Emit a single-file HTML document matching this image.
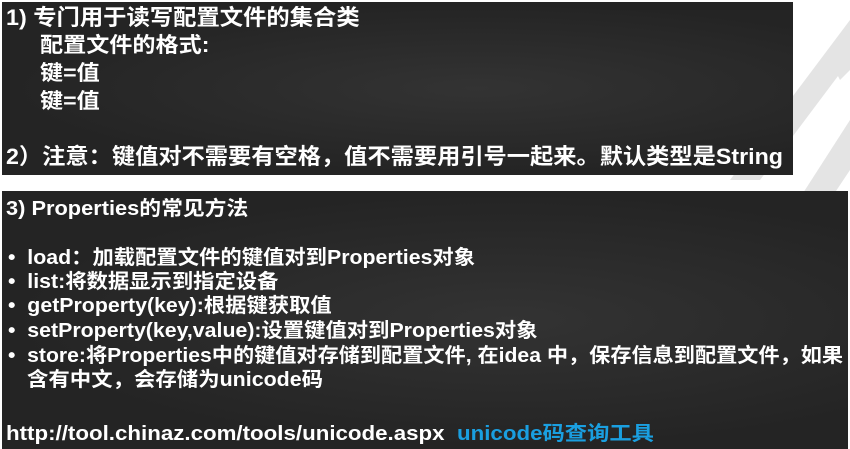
<!DOCTYPE html>
<html><head><meta charset="utf-8"><style>
body{margin:0;width:850px;height:449px;background:#fff;position:relative;overflow:hidden;font-family:"Liberation Sans","Noto Sans CJK SC",sans-serif;font-weight:bold;color:#fff}
.box{position:absolute;background:#262626;background-image:radial-gradient(ellipse at 60% 50%,#333 0%,#242424 70%)}
.t{position:absolute;white-space:nowrap;line-height:1;transform-origin:0 50%}
</style></head><body>
<svg style="position:absolute;left:0;top:0" width="850" height="449">
<polygon points="850,20 850,60 760,180 730,180" fill="#e4e4e4"/>
<polygon points="850,120 850,170 790,260 760,260" fill="#e4e4e4"/>
<polygon points="830,60 850,40 850,70 840,80" fill="#e4e4e4"/>
</svg>
<div class="box" style="left:2px;top:2px;width:791px;height:173px"></div>
<div class="box" style="left:2px;top:191px;width:846px;height:258px"></div>
<div class="t" style="left:6px;top:7px;font-size:22px;transform:scaleX(1.06)">1) 专门用于读写配置文件的集合类</div>
<div class="t" style="left:40px;top:35px;font-size:21px;transform:scaleX(1.1)">配置文件的格式:</div>
<div class="t" style="left:40px;top:63px;font-size:21px;transform:scaleX(1.1)">键=值</div>
<div class="t" style="left:40px;top:91px;font-size:21px;transform:scaleX(1.1)">键=值</div>
<div class="t" style="left:6px;top:146px;font-size:22px;transform:scaleX(1.056)">2）注意：键值对不需要有空格，值不需要用引号一起来。默认类型是String</div>
<div class="t" style="left:6px;top:199px;font-size:20px;transform:scaleX(1.09)">3) Properties的常见方法</div>
<div class="t" style="left:8px;top:248px;font-size:20px;transform:scaleX(1.066)">•&nbsp; load：加载配置文件的键值对到Properties对象</div>
<div class="t" style="left:8px;top:272px;font-size:20px;transform:scaleX(1.066)">•&nbsp; list:将数据显示到指定设备</div>
<div class="t" style="left:8px;top:296px;font-size:20px;transform:scaleX(1.066)">•&nbsp; getProperty(key):根据键获取值</div>
<div class="t" style="left:8px;top:321px;font-size:20px;transform:scaleX(1.066)">•&nbsp; setProperty(key,value):设置键值对到Properties对象</div>
<div class="t" style="left:8px;top:346px;font-size:20px;transform:scaleX(1.058)">•&nbsp; store:将Properties中的键值对存储到配置文件, 在idea 中，保存信息到配置文件，如果</div>
<div class="t" style="left:27px;top:370px;font-size:20px;transform:scaleX(1.07)">含有中文，会存储为unicode码</div>
<div class="t" style="left:6px;top:424px;font-size:20px;transform:scaleX(1.115)">http://tool.chinaz.com/tools/unicode.aspx&nbsp; <span style="color:#1a9fe0">unicode码查询工具</span></div>
</body></html>
